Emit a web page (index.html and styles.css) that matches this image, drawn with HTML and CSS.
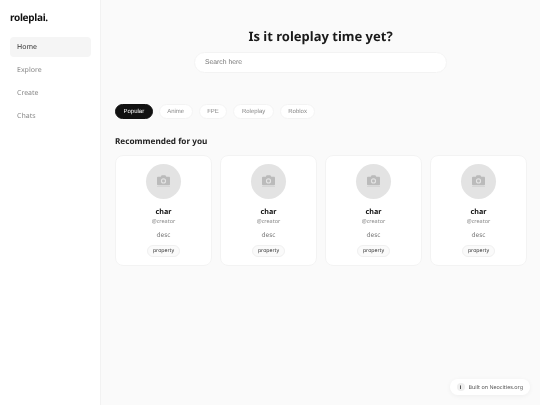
FILE: index.html
```html
<!DOCTYPE html>
<html lang="en">
<head>
    <meta charset="UTF-8">
    <meta name="viewport" content="width=device-width, initial-scale=1.0">
    <title>roleplai</title>
    <link rel="stylesheet" href="styles.css">
</head>
<body>
    <aside class="sidebar">
        <div class="logo">roleplai.</div>
        <nav class="nav">
            <a class="nav-item active">Home</a>
            <a class="nav-item">Explore</a>
            <a class="nav-item">Create</a>
            <a class="nav-item">Chats</a>
        </nav>
    </aside>
    <main class="main">
        <section class="hero">
            <h1>Is it roleplay time yet?</h1>
            <div class="search">Search here</div>
        </section>
        <div class="tags">
            <span class="tag selected">Popular</span>
            <span class="tag">Anime</span>
            <span class="tag">FPE</span>
            <span class="tag">Roleplay</span>
            <span class="tag">Roblox</span>
        </div>
        <h2>Recommended for you</h2>
        <div class="cards">
            <div class="card">
                <div class="avatar"><svg class="camera" viewBox="0 0 14 14"><path fill-rule="evenodd" d="M1 2h3l1-1.6h4L10 2h3a1 1 0 0 1 1 1v7a1 1 0 0 1-1 1H1a1 1 0 0 1-1-1V3a1 1 0 0 1 1-1zm6 1.6a2.8 2.8 0 1 0 0 5.6 2.8 2.8 0 0 0 0-5.6zm0 1.2a1.6 1.6 0 1 1 0 3.2 1.6 1.6 0 0 1 0-3.2z"/><rect x="0" y="12" width="14" height="0.8" opacity="0.45"/></svg></div>
                <div class="char">char</div>
                <div class="creator">@creator</div>
                <div class="desc">desc</div>
                <span class="prop">property</span>
            </div>
            <div class="card">
                <div class="avatar"><svg class="camera" viewBox="0 0 14 14"><path fill-rule="evenodd" d="M1 2h3l1-1.6h4L10 2h3a1 1 0 0 1 1 1v7a1 1 0 0 1-1 1H1a1 1 0 0 1-1-1V3a1 1 0 0 1 1-1zm6 1.6a2.8 2.8 0 1 0 0 5.6 2.8 2.8 0 0 0 0-5.6zm0 1.2a1.6 1.6 0 1 1 0 3.2 1.6 1.6 0 0 1 0-3.2z"/><rect x="0" y="12" width="14" height="0.8" opacity="0.45"/></svg></div>
                <div class="char">char</div>
                <div class="creator">@creator</div>
                <div class="desc">desc</div>
                <span class="prop">property</span>
            </div>
            <div class="card">
                <div class="avatar"><svg class="camera" viewBox="0 0 14 14"><path fill-rule="evenodd" d="M1 2h3l1-1.6h4L10 2h3a1 1 0 0 1 1 1v7a1 1 0 0 1-1 1H1a1 1 0 0 1-1-1V3a1 1 0 0 1 1-1zm6 1.6a2.8 2.8 0 1 0 0 5.6 2.8 2.8 0 0 0 0-5.6zm0 1.2a1.6 1.6 0 1 1 0 3.2 1.6 1.6 0 0 1 0-3.2z"/><rect x="0" y="12" width="14" height="0.8" opacity="0.45"/></svg></div>
                <div class="char">char</div>
                <div class="creator">@creator</div>
                <div class="desc">desc</div>
                <span class="prop">property</span>
            </div>
            <div class="card">
                <div class="avatar"><svg class="camera" viewBox="0 0 14 14"><path fill-rule="evenodd" d="M1 2h3l1-1.6h4L10 2h3a1 1 0 0 1 1 1v7a1 1 0 0 1-1 1H1a1 1 0 0 1-1-1V3a1 1 0 0 1 1-1zm6 1.6a2.8 2.8 0 1 0 0 5.6 2.8 2.8 0 0 0 0-5.6zm0 1.2a1.6 1.6 0 1 1 0 3.2 1.6 1.6 0 0 1 0-3.2z"/><rect x="0" y="12" width="14" height="0.8" opacity="0.45"/></svg></div>
                <div class="char">char</div>
                <div class="creator">@creator</div>
                <div class="desc">desc</div>
                <span class="prop">property</span>
            </div>
        </div>
    </main>
    <div class="badge"><span class="badge-icon">i</span>Built on Neocities.org</div>
</body>
</html>
```

FILE: styles.css
```css
* {
    box-sizing: border-box;
}
html, body {
    height: 100%;
}
body {
    margin: 0;
    display: flex;
    overflow: hidden;
    font-family: "Noto Sans", sans-serif;
    text-rendering: geometricPrecision;
    color: #111;
    background-color: #fafafa;
}
.sidebar {
    width: 101px;
    flex-shrink: 0;
    padding: 10px 9px 0 10px;
    background-color: #fff;
    border-right: 1px solid #f2f2f2;
    will-change: transform;
}
.logo {
    font-size: 10px;
    font-weight: 700;
    letter-spacing: -0.3px;
    line-height: 15px;
    margin-bottom: 12px;
}
.nav {
    display: flex;
    flex-direction: column;
    gap: 3px;
}
.nav-item {
    height: 20px;
    padding-left: 7px;
    border-radius: 4px;
    font-size: 7px;
    line-height: 22px;
    color: #888;
}
.nav-item.active {
    background-color: #f5f5f5;
    color: #333;
}
.main {
    flex-grow: 1;
    padding: 26px 13px 0 14px;
    will-change: transform;
}
.hero {
    display: flex;
    flex-direction: column;
    align-items: center;
    padding-right: 1px;
}
h1 {
    margin: 0 0 6px;
    font-size: 13px;
    line-height: 20px;
    font-weight: 700;
    color: #1a1a1a;
}
.search {
    width: 253px;
    height: 21px;
    padding-left: 10px;
    border: 1px solid #f3f3f3;
    border-radius: 11px;
    background-color: #fff;
    font-family: "Liberation Sans", sans-serif;
    font-size: 6.8px;
    line-height: 20px;
    color: #777;
}
.tags {
    display: flex;
    gap: 6px;
    margin-top: 31px;
}
.tag {
    height: 15px;
    padding: 0 7.5px;
    border: 1px solid #f3f3f3;
    border-radius: 8px;
    background-color: #fff;
    font-family: "Liberation Sans", sans-serif;
    font-size: 6px;
    line-height: 14px;
    color: #888;
}
.tag.selected {
    border-color: #111;
    background-color: #111;
    color: #fff;
}
h2 {
    margin: 16px 0 6px;
    font-size: 8.2px;
    line-height: 14px;
    font-weight: 700;
    color: #222;
}
.cards {
    display: grid;
    grid-template-columns: repeat(4, 97px);
    gap: 8px;
}
.card {
    height: 111px;
    padding-top: 8px;
    display: flex;
    flex-direction: column;
    align-items: center;
    border: 1px solid #f3f3f3;
    border-radius: 8px;
    background-color: #fff;
}
.avatar {
    width: 35px;
    height: 35px;
    display: flex;
    align-items: center;
    justify-content: center;
    border-radius: 50%;
    background-color: #e3e3e3;
}
.camera {
    width: 13px;
    height: 13px;
    fill: #bbb;
}
.char {
    margin-top: 8px;
    font-size: 7.2px;
    font-weight: 700;
    line-height: 10px;
}
.creator {
    font-size: 5.5px;
    line-height: 9px;
    color: #888;
}
.desc {
    margin-top: 4px;
    font-size: 6.5px;
    line-height: 10px;
    color: #777;
}
.prop {
    margin-top: 5px;
    height: 12px;
    padding: 0 4.5px;
    border: 1px solid #f0f0f0;
    border-radius: 6px;
    background-color: #fafafa;
    font-size: 5.2px;
    line-height: 9.5px;
    color: #333;
}
.badge {
    position: absolute;
    right: 10px;
    bottom: 10px;
    height: 16px;
    display: flex;
    align-items: center;
    gap: 4px;
    padding: 0 7px;
    border-radius: 8px;
    background-color: #fff;
    box-shadow: 0 1px 5px rgba(0, 0, 0, 0.05);
    font-size: 5.4px;
    color: #555;
}
.badge-icon {
    width: 8px;
    height: 8px;
    border-radius: 50%;
    background-color: #eee;
    text-align: center;
    line-height: 8px;
    font-weight: 700;
    color: #333;
}
```
